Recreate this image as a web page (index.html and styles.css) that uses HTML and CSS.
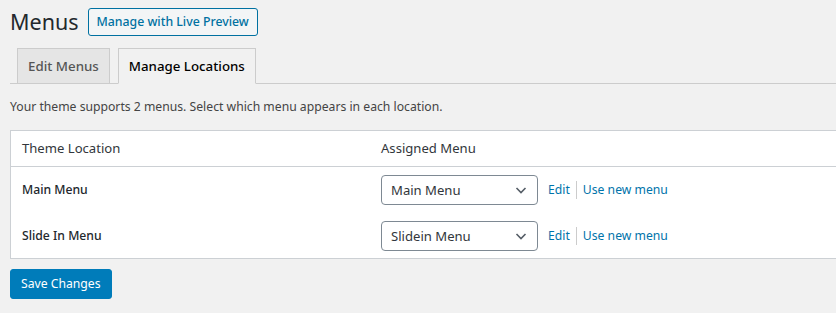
FILE: index.html
```html
<!DOCTYPE html>
<html lang="en">
  <head>
    <meta charset="utf-8">
    <title>Menus</title>
    <link rel="stylesheet" href="styles.css">
  </head>
  <body>
    <div class="wrap">
      <div class="page-head">
        <h1 class="page-title">Menus</h1>
        <a href="#" class="title-action">Manage with Live Preview</a>
      </div>

      <nav class="tabs">
        <a href="#" class="tab">Edit Menus</a>
        <a href="#" class="tab tab-active">Manage Locations</a>
      </nav>

      <p class="intro">Your theme supports 2 menus. Select which menu appears in each location.</p>

      <table class="locations">
        <thead>
          <tr>
            <th class="col-location">Theme Location</th>
            <th>Assigned Menu</th>
          </tr>
        </thead>
        <tbody>
          <tr>
            <td class="loc-name">Main Menu</td>
            <td>
              <div class="assign">
                <div class="select"><span>Main Menu</span>
                  <svg width="16" height="16" viewBox="0 0 16 16"><path d="M3.5 6l4.5 4.5L12.5 6" fill="none" stroke="#555d66" stroke-width="1.6"/></svg>
                </div>
                <a href="#" class="link">Edit</a><span class="sep"></span><a href="#" class="link">Use new menu</a>
              </div>
            </td>
          </tr>
          <tr>
            <td class="loc-name">Slide In Menu</td>
            <td>
              <div class="assign">
                <div class="select"><span>Slidein Menu</span>
                  <svg width="16" height="16" viewBox="0 0 16 16"><path d="M3.5 6l4.5 4.5L12.5 6" fill="none" stroke="#555d66" stroke-width="1.6"/></svg>
                </div>
                <a href="#" class="link">Edit</a><span class="sep"></span><a href="#" class="link">Use new menu</a>
              </div>
            </td>
          </tr>
        </tbody>
      </table>

      <button class="save">Save Changes</button>
    </div>
  </body>
</html>
```

FILE: styles.css
```css
/* page base */
body {
    margin: 0;
    background-color: #f1f1f1;
    color: #444;
    font-family: "Noto Sans", "Open Sans", sans-serif;
    font-size: 12.2px;
    line-height: 1.4;
    overflow: hidden;
}

.wrap {
    padding-left: 10px;
    width: 900px;
}

/* title row */
.page-head {
    display: flex;
    align-items: center;
    padding-top: 8px;
    height: 28px;
}
.page-title {
    font-size: 21.5px;
    font-weight: 400;
    color: #23282d;
    margin: 0 9px 0 0;
    line-height: 28px;
}
.title-action {
    display: inline-block;
    box-sizing: border-box;
    height: 28px;
    line-height: 26px;
    padding: 0 8px;
    border: 1px solid #0071a1;
    border-radius: 3px;
    background-color: #f3f5f6;
    color: #0071a1;
    font-weight: 500;
    text-decoration: none;
    font-size: 12.3px;
}

/* tabs */
.tabs {
    display: flex;
    margin-top: 12px;
    border-bottom: 1px solid #ccc;
    height: 35px;
}
.tab {
    display: block;
    box-sizing: border-box;
    height: 36px;
    margin-left: 7px;
    padding: 5px 10px;
    border: 1px solid #ccc;
    background-color: #e5e5e5;
    color: #555;
    font-size: 13.3px;
    font-weight: 500;
    line-height: 24px;
    text-decoration: none;
}
.tab + .tab {
    margin-left: 8px;
}
.tab-active {
    background-color: #f1f1f1;
    color: #000;
    border-bottom-color: #f1f1f1;
}

.intro {
    margin: 13px 0 13px;
    line-height: 20px;
}

/* locations table */
.locations {
    width: 860px;
    border: 1px solid #ccd0d4;
    border-collapse: collapse;
    background-color: #fff;
}
.locations th {
    text-align: left;
    font-weight: 400;
    font-size: 13.1px;
    color: #32373c;
    height: 35px;
    padding: 0 11px;
    border-bottom: 1px solid #ccd0d4;
}
.locations th.col-location {
    width: 337px;
}
.locations td {
    padding: 8px 11px;
}
.locations tbody tr:first-child td {
    padding-top: 8px;
}
.locations tbody tr:last-child td {
    padding-bottom: 7px;
}
.loc-name {
    font-weight: 500;
    color: #23282d;
}

.assign {
    display: flex;
    align-items: center;
}
.select {
    display: flex;
    align-items: center;
    justify-content: space-between;
    box-sizing: border-box;
    width: 157px;
    height: 30px;
    padding: 0 8px 0 9px;
    border: 1px solid #7e8993;
    border-radius: 4px;
    color: #32373c;
    font-size: 13.1px;
    margin-right: 10px;
}
.link {
    color: #0073aa;
    text-decoration: none;
}
.sep {
    display: inline-block;
    width: 1px;
    height: 18px;
    background-color: #ccc;
    margin: 0 6px;
}

/* save */
.save {
    display: block;
    margin-top: 10px;
    height: 30px;
    padding: 0 10px;
    border: 1px solid #007cba;
    border-radius: 3px;
    background-color: #007cba;
    color: #fff;
    font-family: inherit;
    font-size: 12.2px;
    line-height: 28px;
}
```
